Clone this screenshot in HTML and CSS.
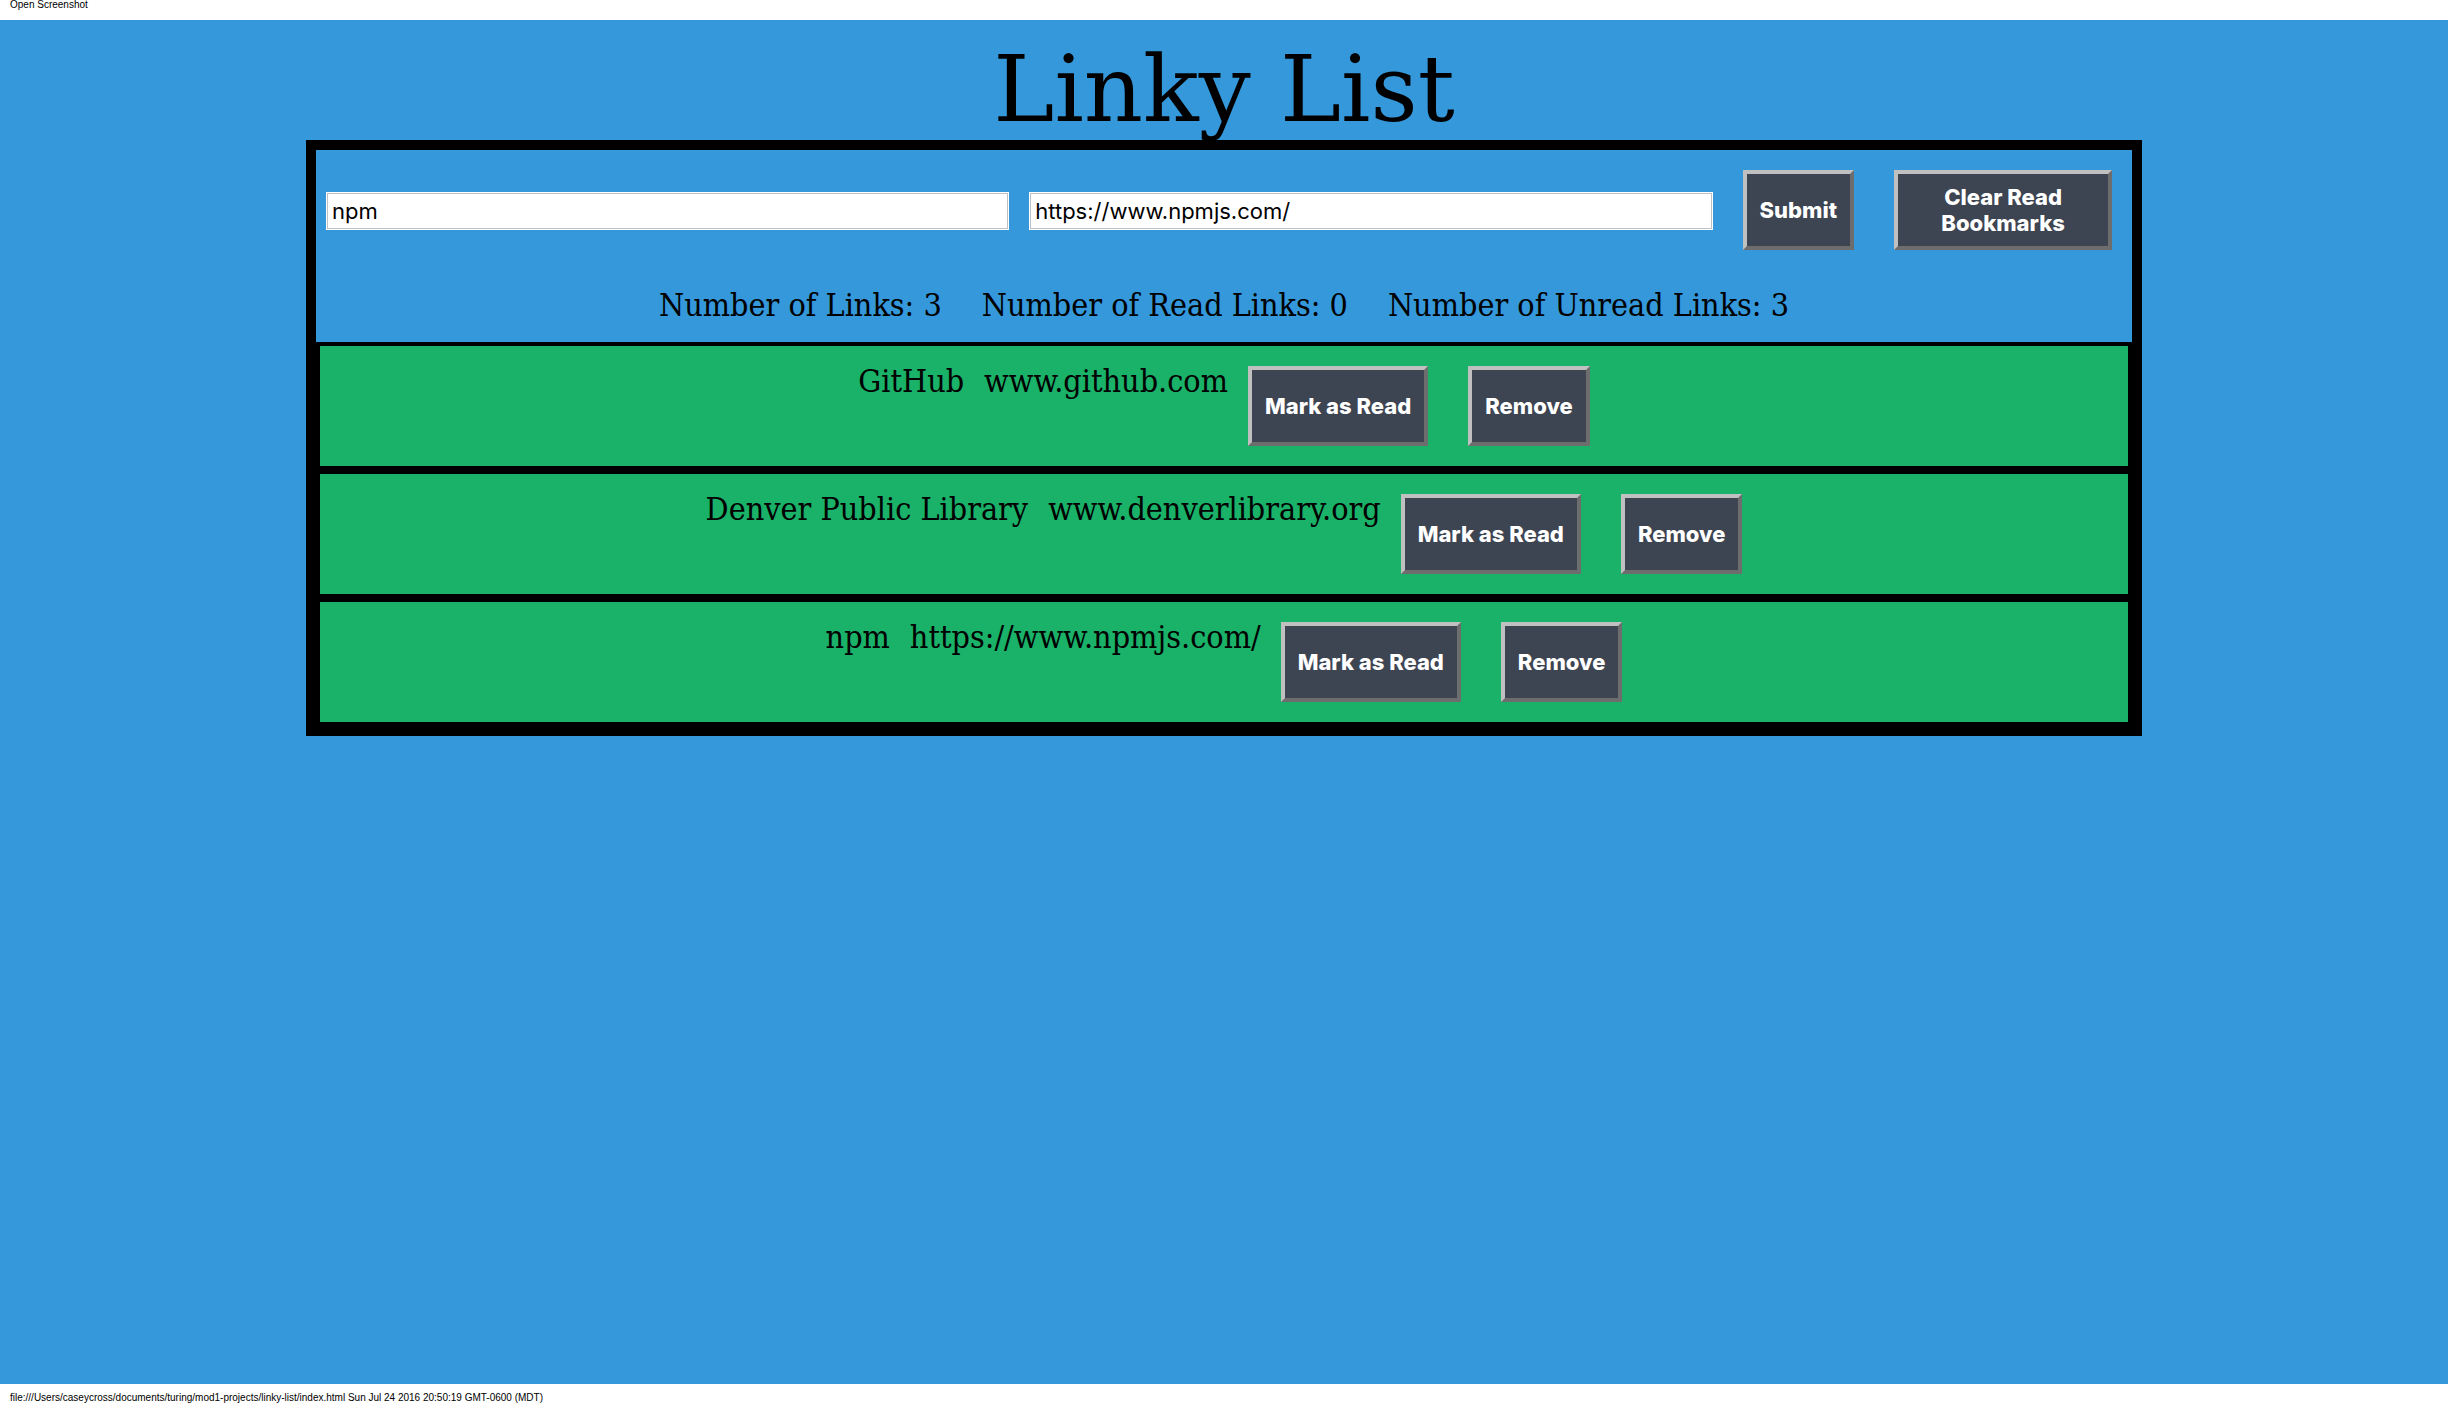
FILE: index.html
```html
<!DOCTYPE html>
<html lang="en">
<head>
<meta charset="utf-8">
<title>Linky List</title>
<link rel="stylesheet" href="styles.css">
</head>
<body>
<header class="capture-bar"><a class="capture-link" href="#">Open Screenshot</a></header>
<main class="page">
  <h1 class="title">Linky List</h1>
  <div class="board">
    <form class="entry">
      <input class="field" type="text" aria-label="Website title" value="npm">
      <input class="field" type="text" aria-label="Website URL" value="https://www.npmjs.com/">
      <button class="button" type="button">Submit</button>
      <button class="button button-clear" type="button">Clear Read Bookmarks</button>
    </form>
    <div class="stats">
      <span>Number of Links: 3</span>
      <span>Number of Read Links: 0</span>
      <span>Number of Unread Links: 3</span>
    </div>
    <section class="bookmark">
      <h2 class="name">GitHub</h2>
      <a class="url" href="#">www.github.com</a>
      <div class="actions">
        <button class="button" type="button">Mark as Read</button>
        <button class="button" type="button">Remove</button>
      </div>
    </section>
    <section class="bookmark">
      <h2 class="name">Denver Public Library</h2>
      <a class="url" href="#">www.denverlibrary.org</a>
      <div class="actions">
        <button class="button" type="button">Mark as Read</button>
        <button class="button" type="button">Remove</button>
      </div>
    </section>
    <section class="bookmark">
      <h2 class="name">npm</h2>
      <a class="url" href="#">https://www.npmjs.com/</a>
      <div class="actions">
        <button class="button" type="button">Mark as Read</button>
        <button class="button" type="button">Remove</button>
      </div>
    </section>
  </div>
</main>
<footer class="capture-bar capture-footer">file:///Users/caseycross/documents/turing/mod1-projects/linky-list/index.html Sun Jul 24 2016 20:50:19 GMT-0600 (MDT)</footer>
</body>
</html>
```
FILE: styles.css
```css
* {
  box-sizing: border-box;
}

body {
  margin: 0;
  min-height: 100vh;
  display: flex;
  flex-direction: column;
  background: #fff;
  color: #000;
  font-family: "DejaVu Serif Condensed", "DejaVu Serif", serif;
}

.capture-bar {
  height: 20px;
  padding: 0 10px;
  font: 10px/10px "Liberation Sans", Arial, sans-serif;
}

.capture-footer {
  padding-top: 9px;
}

.capture-link {
  display: block;
  color: inherit;
  text-decoration: none;
}

.page {
  flex: 1;
  background: #3498db;
}

.title {
  margin: 0;
  padding-top: 20px;
  font: 400 92px/100px "DejaVu Serif", serif;
  text-align: center;
}

.board {
  width: 75%;
  margin: 0 auto;
  border: 10px solid #000;
}

.entry {
  display: flex;
  align-items: center;
  padding: 20px 0;
}

.field {
  flex: 1;
  min-width: 0;
  height: 38px;
  margin: 2px 10px 0;
  padding: 0 5px;
  border: 1px solid #fff;
  border-radius: 0;
  background: #fff;
  box-shadow: inset 0 0 0 1px #bfbfc4;
  color: #000;
  font: 22px/26px Inter, sans-serif;
}

.button {
  height: 80px;
  margin: 0 20px;
  padding: 0 13px;
  border: 4px solid;
  border-color: #c0c0c0 #6d6d6d #6d6d6d #c0c0c0;
  background: #3d4452;
  color: #fff;
  font: 800 22px/26px Inter, sans-serif;
}

.button-clear {
  width: 12%;
}

.stats {
  display: flex;
  justify-content: center;
  gap: 40px;
  padding: 20px 0 22px;
  font-size: 32px;
  line-height: 30px;
}

.bookmark {
  display: flex;
  justify-content: center;
  gap: 20px;
  padding: 20px;
  border: 4px solid #000;
  background: #1ab168;
  font-size: 32px;
  line-height: 30px;
}

.name {
  margin: 0;
  font-size: inherit;
  font-weight: 400;
}

.url {
  color: inherit;
  text-decoration: none;
}

.actions {
  display: flex;
  gap: 40px;
}

.actions .button {
  margin: 0;
}
```
